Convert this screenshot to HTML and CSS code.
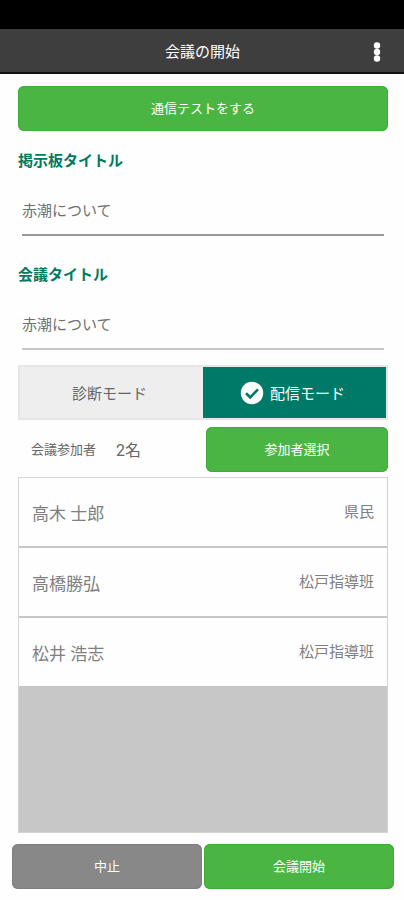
FILE: index.html
```html
<!DOCTYPE html>
<html lang="ja">
<head>
<meta charset="utf-8">
<meta name="viewport" content="width=device-width, initial-scale=1">
<title>会議の開始</title>
<link rel="stylesheet" href="styles.css">
</head>
<body>
<div class="status-bar"></div>
<header class="app-bar">
  <h1 class="app-title">会議の開始</h1>
  <button class="menu-button" type="button" aria-label="メニュー">
    <svg width="12" height="24" viewBox="0 0 12 24" fill="#fff" aria-hidden="true">
      <circle cx="6" cy="5.5" r="3.2"/><circle cx="6" cy="12" r="3.2"/><circle cx="6" cy="18.5" r="3.2"/>
    </svg>
  </button>
</header>
<main class="content">
  <button class="button" type="button">通信テストをする</button>
  <div class="field">
    <label class="field-label" for="board-title">掲示板タイトル</label>
    <input class="field-input" id="board-title" type="text" value="赤潮について">
  </div>
  <div class="field">
    <label class="field-label" for="meeting-title">会議タイトル</label>
    <input class="field-input field-input-light" id="meeting-title" type="text" value="赤潮について">
  </div>
  <div class="modes">
    <button class="mode" type="button" aria-pressed="false">診断モード</button>
    <button class="mode mode-active" type="button" aria-pressed="true">
      <svg width="24" height="24" viewBox="0 0 24 24" aria-hidden="true">
        <circle cx="12" cy="12" r="11.2" fill="#fff"/>
        <path d="M6 12.2l4.2 4.1 7.8-8" fill="none" stroke="#007a68" stroke-width="2.6"/>
      </svg>
      <span>配信モード</span>
    </button>
  </div>
  <div class="participants">
    <div class="summary"><span>会議参加者</span><span class="count">2名</span></div>
    <button class="button" type="button">参加者選択</button>
  </div>
  <ul class="list">
    <li class="person"><span class="name">高木 士郎</span><span class="group">県民</span></li>
    <li class="person"><span class="name">高橋勝弘</span><span class="group">松戸指導班</span></li>
    <li class="person"><span class="name">松井 浩志</span><span class="group">松戸指導班</span></li>
  </ul>
</main>
<footer class="actions">
  <button class="button button-cancel" type="button">中止</button>
  <button class="button" type="button">会議開始</button>
</footer>
</body>
</html>
```
FILE: styles.css
```css
* {
  box-sizing: border-box;
}

body {
  display: flex;
  flex-direction: column;
  min-height: 100vh;
  margin: 0;
  background: #fefefe;
  color: #666;
  font-family: Roboto, "Noto Sans CJK JP", sans-serif;
  font-size: 15px;
}

button,
input {
  margin: 0;
  border: 0;
  font: inherit;
}

.status-bar {
  height: 29px;
  background: #000;
}

.app-bar {
  display: grid;
  grid-template-columns: 40px 1fr 40px;
  align-items: center;
  height: 45px;
  padding: 3px 7px 0 8px;
  border-bottom: 2px solid #111;
  background: #3e3e3e;
  color: #fff;
}

.app-title {
  grid-column: 2;
  margin: 0;
  font-size: 15px;
  font-weight: 400;
  line-height: 24px;
  text-align: center;
}

.menu-button {
  display: flex;
  justify-content: center;
  justify-self: end;
  width: 40px;
  padding: 0;
  background: none;
}

.content {
  display: flex;
  flex: 1;
  flex-direction: column;
  padding: 12px 16px 11px 18px;
}

.button {
  height: 45px;
  padding: 0 0 2px;
  border-radius: 6px;
  background: #4bb543;
  box-shadow: inset 0 0 1px 1px #3eae36;
  color: #fff;
  font-size: 13px;
}

.button-cancel {
  background: #888;
  box-shadow: inset 0 0 1px 1px #808080;
}

.field {
  display: flex;
  flex-direction: column;
  padding-top: 18px;
}

.field-label {
  color: #007a60;
  font-weight: 700;
  line-height: 24px;
}

.field-input {
  height: 48px;
  margin: 15px 4px 9px;
  padding: 0 0 3px;
  border-bottom: 2px solid #999;
  outline: 0;
  background: none;
  color: #707070;
}

.field-input-light {
  border-color: #c8c8c8;
}

.modes {
  display: grid;
  grid-template-columns: 1fr 1fr;
  margin-top: 6px;
  padding: 2px;
  background: #e6e6e6;
}

.mode {
  display: flex;
  align-items: center;
  justify-content: center;
  gap: 6px;
  height: 51px;
  padding: 0 4px 0 0;
  background: #eee;
  color: #666;
}

.mode-active {
  background: #007a68;
  color: #fff;
}

.participants {
  display: grid;
  grid-template-columns: 1fr 1fr;
  gap: 6px;
  margin-top: 7px;
}

.summary {
  display: flex;
  align-items: center;
  gap: 20px;
  padding: 0 0 2px 13px;
  font-size: 13px;
}

.count {
  font-size: 16px;
}

.list {
  flex: 1;
  margin: 5px 0 0;
  padding: 0;
  border: 1px solid #d4d4d4;
  background: #c7c7c7;
  list-style: none;
}

.person {
  display: flex;
  align-items: center;
  justify-content: space-between;
  height: 70px;
  padding: 0 13px 3px;
  border-bottom: 2px solid #c7c7c7;
  background: #fefefe;
  color: #808080;
}

.name {
  padding-top: 4px;
  font-size: 17px;
}

.actions {
  display: grid;
  grid-template-columns: 1fr 1fr;
  gap: 2px;
  padding: 0 10px 11px 12px;
}
```
